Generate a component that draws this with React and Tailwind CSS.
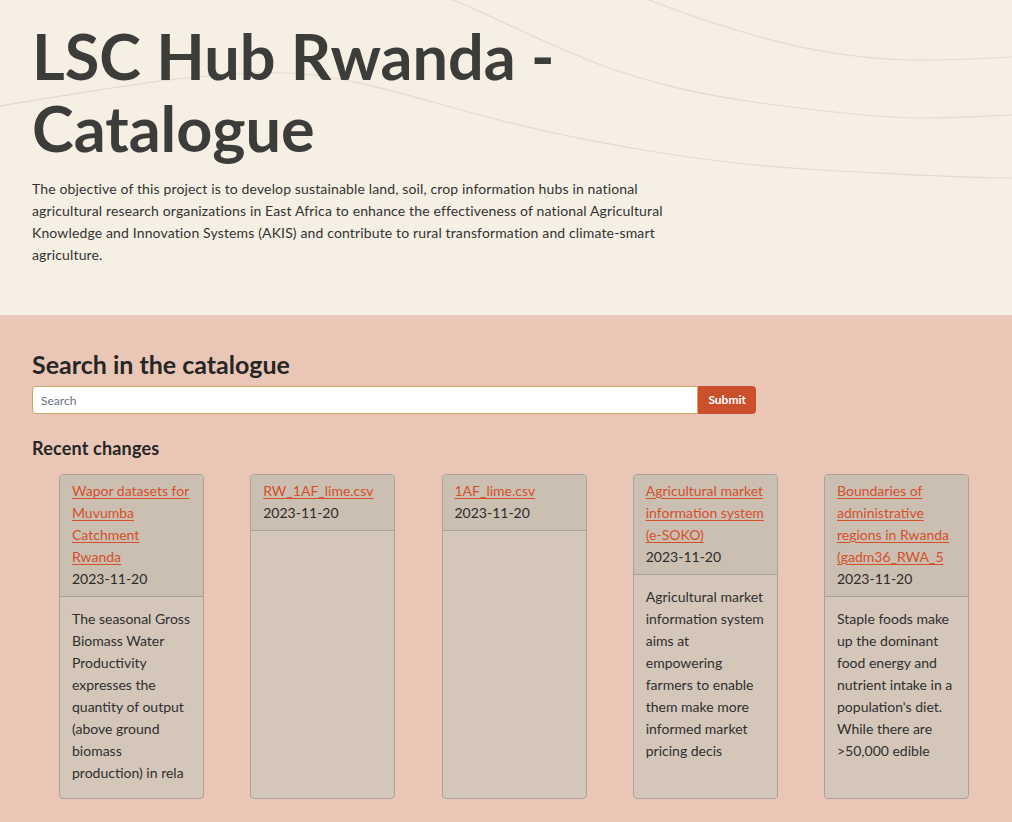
import React from 'react';

const records = [
  {
    title: 'Wapor datasets for Muvumba Catchment Rwanda',
    date: '2023-11-20',
    abstract:
      'The seasonal Gross Biomass Water Productivity expresses the quantity of output (above ground biomass production) in rela',
  },
  { title: 'RW_1AF_lime.csv', date: '2023-11-20', abstract: '' },
  { title: '1AF_lime.csv', date: '2023-11-20', abstract: '' },
  {
    title: 'Agricultural market information system (e-SOKO)',
    date: '2023-11-20',
    abstract:
      'Agricultural market information system aims at empowering farmers to enable them make more informed market pricing decis',
  },
  {
    title: 'Boundaries of administrative regions in Rwanda (gadm36_RWA_5',
    date: '2023-11-20',
    abstract:
      "Staple foods make up the dominant food energy and nutrient intake in a population's diet. While there are >50,000 edible",
  },
];

const Waves = () => (
  <svg
    className="absolute inset-0 w-full h-full pointer-events-none"
    viewBox="0 0 1012 315"
    preserveAspectRatio="none"
    fill="none"
  >
    <path
      d="M0 106 C 90 92, 200 70, 290 73 C 350 75, 420 100, 506 122 C 600 145, 720 166, 839 171 C 920 175, 970 178, 1012 178"
      stroke="#e2dbd0"
      strokeWidth="1.2"
    />
    <path
      d="M453 0 C 480 10, 540 42, 606 67 C 650 82, 690 93, 760 103 C 820 111, 880 118, 923 118 C 960 118, 990 116, 1012 115"
      stroke="#e2dbd0"
      strokeWidth="1.2"
    />
    <path
      d="M649 0 C 680 12, 720 26, 760 37 C 800 48, 850 58, 906 60 C 950 61, 990 58, 1012 57"
      stroke="#e2dbd0"
      strokeWidth="1.2"
    />
  </svg>
);

const RecordCard = ({ record }) => (
  <div className="w-[145px] flex flex-col rounded-[4px] border border-[#aaa299] bg-[#d4c7ba] overflow-hidden">
    <div className="px-3 pt-[5px] pb-[6px] bg-[#cbbfb2] border-b border-[#aaa299] text-sm leading-[22px]">
      <a href="#" className="text-[#d4502b] underline underline-offset-2 break-words">
        {record.title}
      </a>
      <div className="text-[#2b2b2b]">{record.date}</div>
    </div>
    <div className="flex-1 px-3 pt-[11px] pb-[14px] text-sm leading-[22px] text-[#2f2f2f]">
      {record.abstract}
    </div>
  </div>
);

export default function App() {
  return (
    <div className="min-h-screen bg-[#eac6b7] font-['Lato',sans-serif]">
      {/* Hero */}
      <section className="relative h-[315px] bg-[#f5efe4] px-8 overflow-hidden">
        <Waves />
        <div className="relative pt-[20px]">
          <h1 className="text-[63px] leading-[72px] font-bold text-[#3c3c3a] w-[560px]">
            LSC Hub Rwanda - Catalogue
          </h1>
          <p className="mt-[14px] w-[640px] text-sm leading-[22px] tracking-[0.01em] text-[#333333]">
            The objective of this project is to develop sustainable land, soil, crop information hubs in
            national agricultural research organizations in East Africa to enhance the effectiveness of
            national Agricultural Knowledge and Innovation Systems (AKIS) and contribute to rural
            transformation and climate-smart agriculture.
          </p>
        </div>
      </section>

      {/* Search + recent */}
      <section className="px-8 pt-[33px] pb-6">
        <h2 className="text-[25px] leading-8 font-bold text-[#262626]">Search in the catalogue</h2>
        <form className="mt-[6px] flex w-[724px]" onSubmit={(e) => e.preventDefault()}>
          <input
            type="text"
            placeholder="Search"
            className="flex-1 h-[28px] px-2 rounded-l-[4px] border border-[#c9a66b] bg-white text-xs text-[#333] placeholder:text-[#6b7280] outline-none"
          />
          <button
            type="submit"
            className="h-[28px] px-[10px] rounded-r-[4px] bg-[#cb4f2b] text-white text-xs font-bold"
          >
            Submit
          </button>
        </form>

        <h3 className="mt-5 text-lg leading-7 font-bold text-[#262626] tracking-[0.01em]">Recent changes</h3>
        <div className="mt-3 ml-[27px] flex items-stretch gap-[46.25px]">
          {records.map((r, i) => (
            <RecordCard key={i} record={r} />
          ))}
        </div>
      </section>
    </div>
  );
}
